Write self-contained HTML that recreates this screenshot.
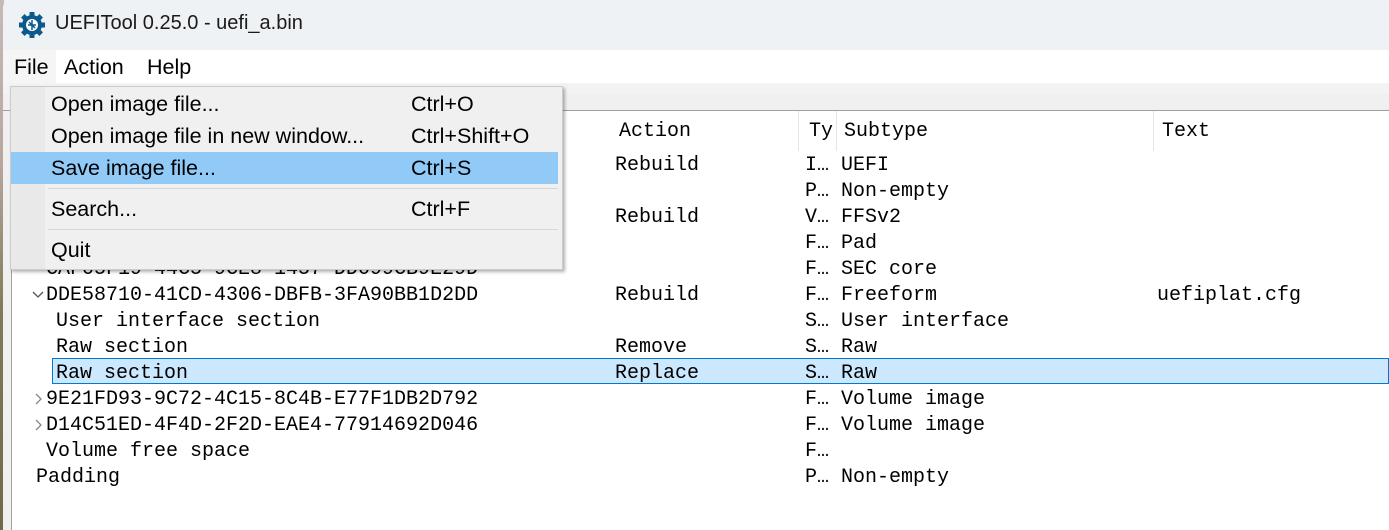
<!DOCTYPE html>
<html><head><meta charset="utf-8">
<style>
*{margin:0;padding:0;box-sizing:border-box}
body{width:1389px;height:530px;overflow:hidden;position:relative;background:#f0f0f0;font-family:"Liberation Sans",sans-serif}
.photo{position:absolute;left:0;top:0;width:4px;height:530px;background:linear-gradient(#c9b9b6,#b8a79f 30%,#7d7a55 60%,#6f6a48)}
.win{position:absolute;left:3px;top:0;right:0;bottom:0;background:#f0f0f0;border-top-left-radius:8px;overflow:hidden}
.title{position:absolute;left:0;top:0;right:0;height:50px;background:#eef2f5}
.title span{position:absolute;left:52px;top:12px;font-size:20px;color:#1a1a1a}
.menubar{position:absolute;left:0;top:50px;right:0;height:33px;background:#fff}
.menubar span{position:absolute;top:5px;font-size:21.5px;color:#000}
.strip1{position:absolute;left:0;top:83px;right:0;height:11px;background:#f3f3f3}
.strip2{position:absolute;left:0;top:94px;right:0;height:17px;background:#f0f0f0;border-bottom:1px solid #a0a0a0}
.tree{position:absolute;left:8px;top:111px;right:0;bottom:0;background:#fff;border-left:1px solid #a0a0a0}
.mono{font-family:"Liberation Mono",monospace;font-size:20px;color:#000;position:absolute;white-space:pre;line-height:26px}
.sep{position:absolute;top:0;height:40px;width:1px;background:#e5e5e5}
.sel{position:absolute;left:40px;top:247px;right:0;height:26px;background:#cce8ff;border:1px solid #0078d7}
.menu{position:absolute;left:10px;top:86px;width:553px;height:184px;background:#f0f0f0;border:1px solid #ccc;box-shadow:2px 2px 3px rgba(0,0,0,.3)}
.gut{position:absolute;left:0;top:0;width:34px;height:100%;background:#e9e9e9}
.mi{position:absolute;left:0;width:547px;height:32px;font-size:21.5px;color:#000}
.mi .l{position:absolute;left:40px;top:4px}
.mi .r{position:absolute;left:400px;top:4px}
.msep{position:absolute;left:37px;width:510px;height:1px;background:#d7d7d7}
</style></head><body>
<div class="photo"></div>
<div class="win">
 <div class="title">
  <svg style="position:absolute;left:15px;top:11px" width="28" height="28" viewBox="0 0 28 28">
   <g fill="#0b5a8e">
    <circle cx="14" cy="14" r="10"/>
    <g><rect x="11.5" y="1" width="5" height="6"/><rect x="11.5" y="21" width="5" height="6"/><rect x="1" y="11.5" width="6" height="5"/><rect x="21" y="11.5" width="6" height="5"/></g>
    <g transform="rotate(45 14 14)"><rect x="11.5" y="1" width="5" height="6"/><rect x="11.5" y="21" width="5" height="6"/><rect x="1" y="11.5" width="6" height="5"/><rect x="21" y="11.5" width="6" height="5"/></g>
   </g>
   <circle cx="14" cy="14" r="6" fill="#fff"/>
   <path d="M10 14h8M14 9v10M11 11l6 6" stroke="#0b5a8e" stroke-width="1.5"/>
  </svg>
  <span>UEFITool 0.25.0 - uefi_a.bin</span>
 </div>
 <div class="menubar">
  <div style="position:absolute;left:0;top:0;width:53px;height:33px;background:#f5f5f5"></div>
  <span style="left:11px">File</span><span style="left:61px">Action</span><span style="left:144px">Help</span>
 </div>
 <div class="strip1"></div>
 <div class="strip2"></div>
</div>
<div class="tree" style="left:11px">
 <div class="sep" style="left:786px"></div><div class="sep" style="left:824px"></div><div class="sep" style="left:1141px"></div>
 <div class="mono" style="left:607px;top:8px">Action</div>
 <div class="mono" style="left:797px;top:8px">Ty</div>
 <div class="mono" style="left:832px;top:8px">Subtype</div>
 <div class="mono" style="left:1150px;top:8px">Text</div>
 <div class="sel"></div>
 <div class="mono" style="left:603px;top:42px">Rebuild

Rebuild


Rebuild

Remove
Replace</div>
 <div class="mono" style="left:793px;top:42px">I… UEFI
P… Non-empty
V… FFSv2
F… Pad
F… SEC core
F… Freeform
S… User interface
S… Raw
S… Raw
F… Volume image
F… Volume image
F…
P… Non-empty</div>
 <div class="mono" style="left:1145px;top:172px">uefiplat.cfg</div>
 <div class="mono" style="left:34px;top:146px">CAF05F19-44C5-9CE8-1457-DD099CB9E29D</div>
 <div class="mono" style="left:34px;top:172px">DDE58710-41CD-4306-DBFB-3FA90BB1D2DD</div>
 <div class="mono" style="left:44px;top:198px">User interface section
Raw section
Raw section</div>
 <div class="mono" style="left:34px;top:276px">9E21FD93-9C72-4C15-8C4B-E77F1DB2D792
D14C51ED-4F4D-2F2D-EAE4-77914692D046
Volume free space</div>
 <div class="mono" style="left:24px;top:354px">Padding</div>
 <svg style="position:absolute;left:20px;top:180px" width="12" height="8"><path d="M1 1l5 5 5-5" stroke="#555" fill="none" stroke-width="1.3"/></svg>
 <svg style="position:absolute;left:23px;top:282px" width="8" height="12"><path d="M1 1l5 5-5 5" stroke="#888" fill="none" stroke-width="1.3"/></svg>
 <svg style="position:absolute;left:23px;top:308px" width="8" height="12"><path d="M1 1l5 5-5 5" stroke="#888" fill="none" stroke-width="1.3"/></svg>
</div>
<div class="menu">
 <div class="gut"></div>
 <div class="mi" style="top:1px"><span class="l">Open image file...</span><span class="r">Ctrl+O</span></div>
 <div class="mi" style="top:33px"><span class="l">Open image file in new window...</span><span class="r">Ctrl+Shift+O</span></div>
 <div class="mi" style="top:65px;background:#91c9f7"><span class="l">Save image file...</span><span class="r">Ctrl+S</span></div>
 <div class="msep" style="top:101px"></div>
 <div class="mi" style="top:106px"><span class="l">Search...</span><span class="r">Ctrl+F</span></div>
 <div class="msep" style="top:142px"></div>
 <div class="mi" style="top:147px"><span class="l">Quit</span></div>
</div>
</body></html>
